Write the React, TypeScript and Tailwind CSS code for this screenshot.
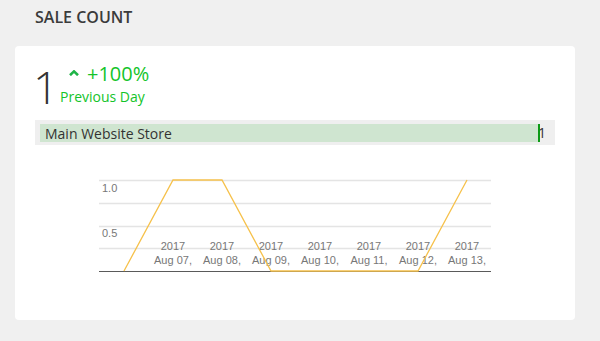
const points = [
  { x: 29, v: 0 },
  { x: 78, v: 1 },
  { x: 127, v: 1 },
  { x: 176, v: 0 },
  { x: 225, v: 0 },
  { x: 274, v: 0 },
  { x: 323, v: 0 },
  { x: 372, v: 1 },
];

const labels = [
  { x: 78, day: "Aug 07," },
  { x: 127, day: "Aug 08," },
  { x: 176, day: "Aug 09," },
  { x: 225, day: "Aug 10," },
  { x: 274, day: "Aug 11," },
  { x: 323, day: "Aug 12," },
  { x: 372, day: "Aug 13," },
];

function SalesChart() {
  const line = points.map((p) => `${p.x},${p.v ? 10 : 101}`).join(" ");
  return (
    <svg width="400" height="110" className="block" style={{ fontFamily: "'Liberation Sans', Arial, sans-serif" }}>
      {[10, 33, 56, 78].map((y) => (
        <line key={y} x1="4" x2="396" y1={y + 0.5} y2={y + 0.5} stroke="#e4e4e4" strokeWidth="1.5" />
      ))}
      <line x1="4" x2="396" y1="101.5" y2="101.5" stroke="#5a5a5a" strokeWidth="1" />
      <text x="7" y="21.5" fontSize="11" fill="#777">1.0</text>
      <text x="7" y="66.5" fontSize="11" fill="#777">0.5</text>
      {labels.map((l) => (
        <text key={l.day} x={l.x} textAnchor="middle" fontSize="11" fill="#777">
          <tspan x={l.x} y="80">2017</tspan>
          <tspan x={l.x} y="94">{l.day}</tspan>
        </text>
      ))}
      <polyline points={line} fill="none" stroke="#f6c14b" strokeWidth="1.3" />
    </svg>
  );
}

export default function App() {
  return (
    <div className="min-h-screen bg-[#f0f0f0] px-[15px] pb-5 font-['Open_Sans',sans-serif]">
      <h2 className="pt-[7px] pl-5 text-[16px] leading-5 font-semibold text-[#3b3b3b]">SALE COUNT</h2>
      <div className="mt-[19px] h-[274px] w-[560px] rounded-[4px] bg-white px-5 pt-[18px]">
        <div className="flex items-start">
          <span className="-ml-[2px] w-[27px] text-[45px] leading-[45px] font-light text-[#333]">1</span>
          <div className="flex flex-col text-[#14c42a]">
            <div className="flex h-[20px] items-center">
              <svg width="10" height="6" viewBox="0 0 10 6" className="ml-[9px] mr-[8px] mt-[-3px]">
                <path d="M1 5.2 L5 1.4 L9 5.2" fill="none" stroke="#1fb447" strokeWidth="2.6" />
              </svg>
              <span className="text-[20px] leading-5">+100%</span>
            </div>
            <span className="mt-[3px] text-[14px] leading-5">Previous Day</span>
          </div>
        </div>
        <div className="mt-[11px] flex h-[25px] items-start bg-[#efefef] pl-[5px] pt-[4px]">
          <div className="relative z-10 flex h-[18px] w-[500px] items-center border-r-2 border-[#0c9a16] bg-[#cfe5d0] pl-[5px] text-[14px] text-[#333]">
            Main Website Store
          </div>
          <span className="-ml-[2px] text-[14px] leading-[18px] text-[#333]">1</span>
        </div>
        <div className="mt-[25px] pl-[60px]">
          <SalesChart />
        </div>
      </div>
    </div>
  );
}
